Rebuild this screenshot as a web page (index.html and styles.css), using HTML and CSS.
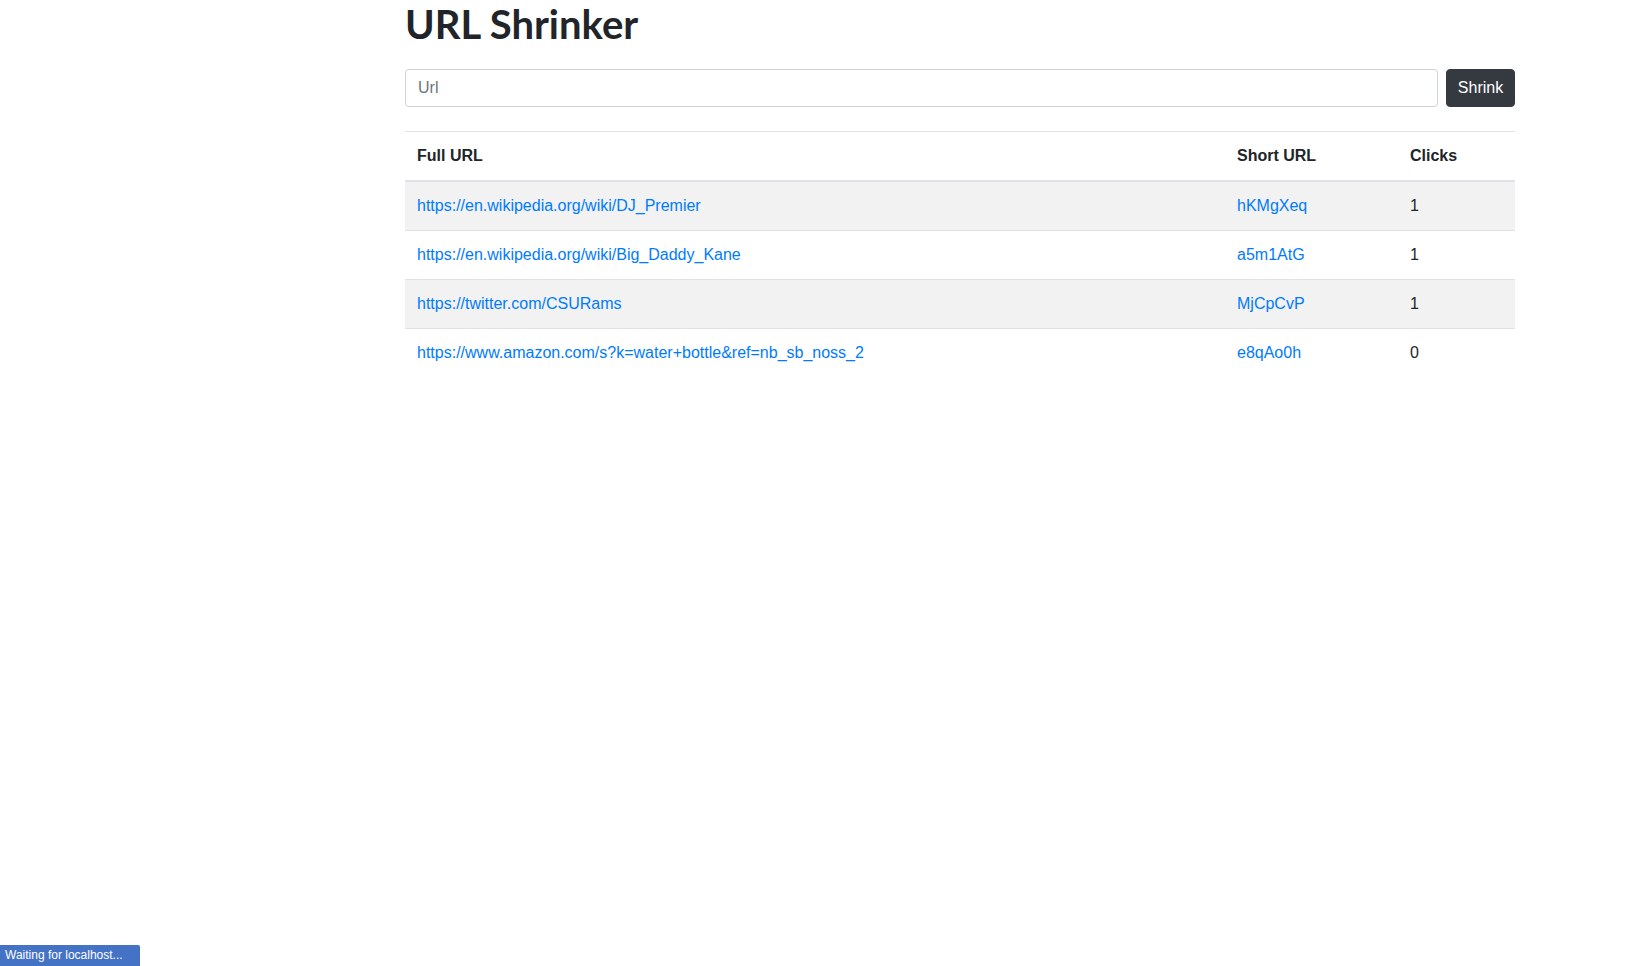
FILE: index.html
```html
<!DOCTYPE html>
<html lang="en">
<head>
<meta charset="utf-8">
<title>URL Shrinker</title>
<link rel="stylesheet" href="styles.css">
</head>
<body>
<main class="container">
  <h1 class="title">URL Shrinker</h1>
  <form class="shrink-form">
    <input class="url-input" type="text" placeholder="Url">
    <button class="btn-dark" type="button">Shrink</button>
  </form>
  <table class="url-table">
    <colgroup>
      <col class="col-full">
      <col class="col-short">
      <col class="col-clicks">
    </colgroup>
    <thead>
      <tr><th>Full URL</th><th>Short URL</th><th>Clicks</th></tr>
    </thead>
    <tbody>
      <tr>
        <td><a href="#">https://en.wikipedia.org/wiki/DJ_Premier</a></td>
        <td><a href="#">hKMgXeq</a></td>
        <td>1</td>
      </tr>
      <tr>
        <td><a href="#">https://en.wikipedia.org/wiki/Big_Daddy_Kane</a></td>
        <td><a href="#">a5m1AtG</a></td>
        <td>1</td>
      </tr>
      <tr>
        <td><a href="#">https://twitter.com/CSURams</a></td>
        <td><a href="#">MjCpCvP</a></td>
        <td>1</td>
      </tr>
      <tr>
        <td><a href="#">https://www.amazon.com/s?k=water+bottle&amp;ref=nb_sb_noss_2</a></td>
        <td><a href="#">e8qAo0h</a></td>
        <td>0</td>
      </tr>
    </tbody>
  </table>
</main>
<div class="status-bar">Waiting for localhost...</div>
</body>
</html>
```
FILE: styles.css
```css
* { box-sizing: border-box; }
html, body { margin: 0; padding: 0; }
body {
  font-family: "Liberation Sans", Arial, sans-serif;
  font-size: 16px;
  line-height: 1.5;
  color: #212529;
  background: #fff;
}
.container {
  width: 1110px;
  margin-left: 405px;
}
.title {
  margin: 0 0 21px;
  font-size: 40px;
  line-height: 1.2;
  font-family: "Lato", "Liberation Sans", sans-serif;
  font-weight: 700;
  color: #212529;
}
.shrink-form {
  display: flex;
  gap: 8px;
  margin: 0 0 24px;
}
.url-input {
  flex: 1;
  height: 38px;
  padding: 6px 12px;
  font: inherit;
  color: #495057;
  border: 1px solid #ced4da;
  border-radius: 4px;
  background: #fff;
}
.url-input::placeholder { color: #6c757d; }
.btn-dark {
  width: 69px;
  height: 38px;
  padding: 6px 0;
  font: inherit;
  color: #fff;
  background: #343a40;
  border: 1px solid #343a40;
  border-radius: 4px;
}
.url-table {
  width: 100%;
  border-collapse: collapse;
  table-layout: fixed;
}
.col-full { width: 820px; }
.col-short { width: 173px; }
.col-clicks { width: 117px; }
.url-table th,
.url-table td {
  padding: 12px;
  border-top: 1px solid #dee2e6;
  text-align: left;
  vertical-align: top;
  white-space: nowrap;
}
.url-table th { font-weight: 700; }
.url-table thead th { border-bottom: 2px solid #dee2e6; }
.url-table tbody tr:nth-of-type(odd) { background: #f2f2f2; }
.url-table a { color: #007bff; text-decoration: none; }
.status-bar {
  position: fixed;
  left: 0;
  bottom: 0;
  width: 140px;
  height: 21px;
  padding: 2px 0 0 5px;
  background: #4472c4;
  color: #fff;
  font-size: 12px;
  line-height: 17px;
  border-top-right-radius: 2px;
  white-space: nowrap;
}
```
